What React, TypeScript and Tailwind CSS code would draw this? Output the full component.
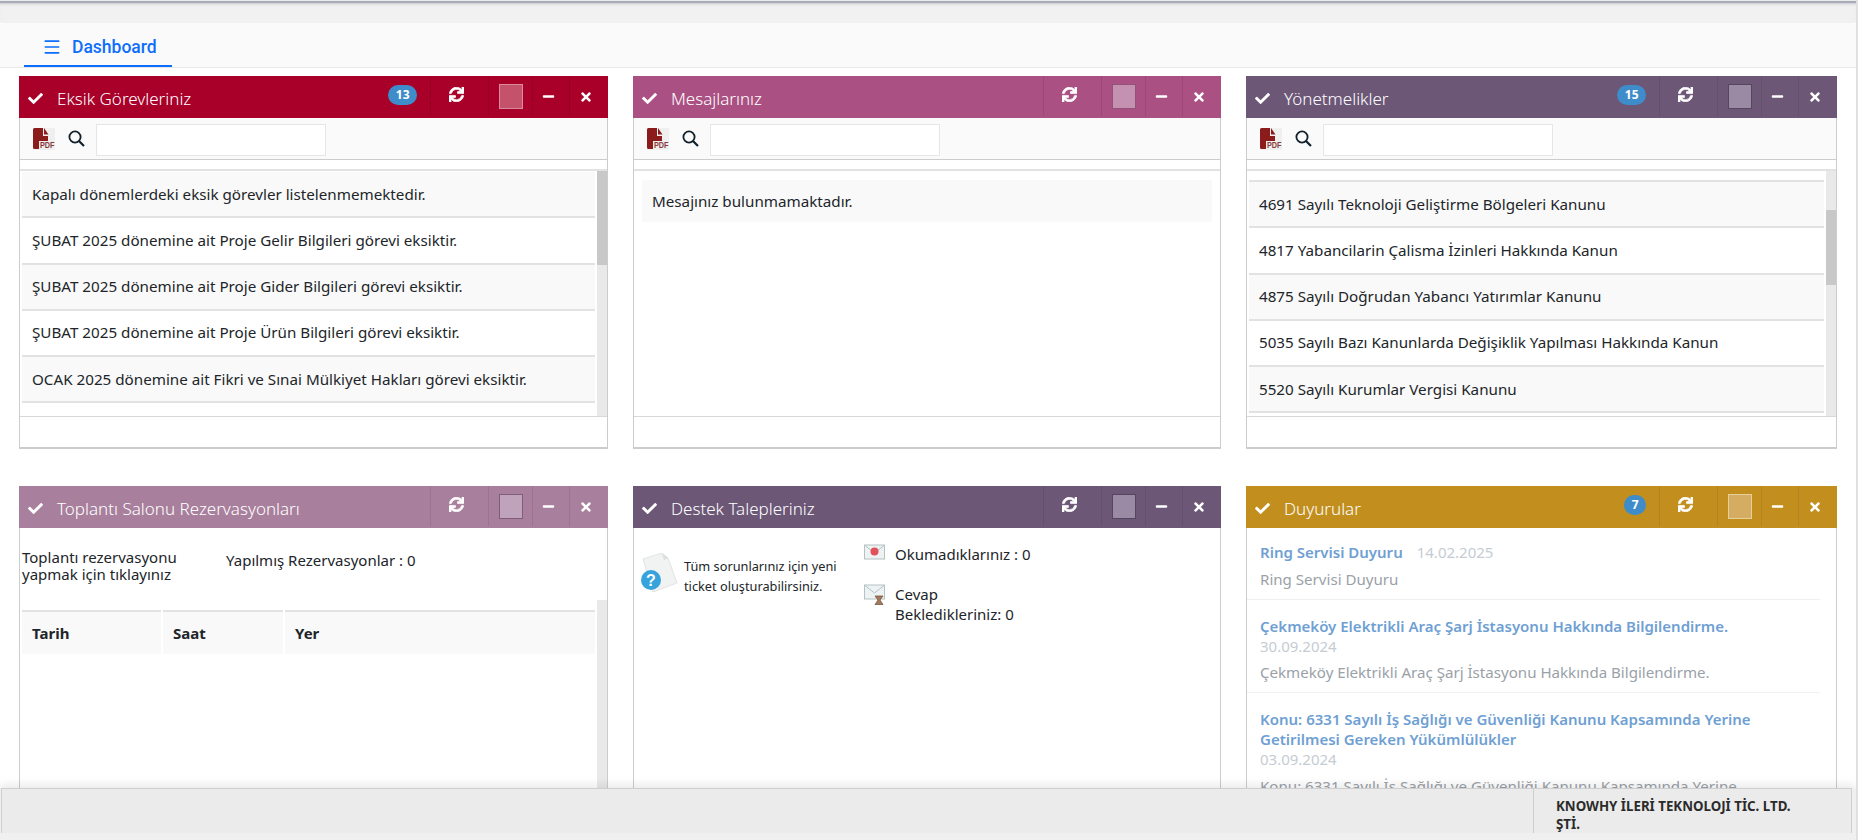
import { ReactNode } from 'react';
import { FaCheck, FaMinus, FaSync, FaTimes } from 'react-icons/fa';
import { Menu } from 'lucide-react';

const PdfIcon = () => (
  <svg width="22" height="22" viewBox="0 0 22 22" className="shrink-0 overflow-visible">
    <rect width="22" height="22" fill="#efefef" />
    <path d="M0 1.5 Q0 0 1.5 0 H10 V8 H15 V13 H6 V21 H1.5 Q0 21 0 19.5 Z" fill="#8c1c1c" />
    <path d="M11 0 L15.5 6.5 H11 Z" fill="#8c1c1c" />
    <text
      x="7"
      y="20"
      fontSize="8.5"
      fontWeight="700"
      fill="#8a3a3a"
      textLength="14.5"
      lengthAdjust="spacingAndGlyphs"
      fontFamily="'Liberation Sans', sans-serif"
    >
      PDF
    </text>
  </svg>
);

const SearchIcon = () => (
  <svg width="17" height="17" viewBox="0 0 17 17" fill="none" stroke="#10202c" strokeWidth="1.8" className="shrink-0">
    <circle cx="7" cy="7" r="5.6" />
    <path d="M11 11 L16 16" strokeWidth="2.2" />
  </svg>
);

const TicketIcon = () => (
  <svg width="38" height="40" viewBox="0 0 38 40" className="shrink-0">
    <path d="M3 6 L22 0 L28 5 L37 30 L13 39 Z" fill="#f1f2f2" stroke="#e2e4e4" />
    <path d="M22 0 L24 7 L28 5 Z" fill="#dcdfdf" />
    <circle cx="11" cy="27" r="10" fill="#36a3dc" />
    <text x="11" y="33" textAnchor="middle" fontSize="16" fontWeight="700" fill="#fff" fontFamily="'Liberation Sans', sans-serif">?</text>
  </svg>
);

const MailIcon = ({ hourglass }: { hourglass?: boolean }) => (
  <svg width="21" height={hourglass ? 21 : 16} viewBox={hourglass ? '0 0 21 21' : '0 0 21 16'} className="shrink-0">
    <rect x="0.5" y="1" width="20" height="14" fill="#eef2f2" stroke="#b4c2c2" />
    <path d="M1 1.5 L10.5 9 L20 1.5" fill="none" stroke="#b4c2c2" />
    {hourglass ? (
      <path d="M11 12 H19 L16 16 L19 20.5 H11 L14 16 Z" fill="#a57a5c" stroke="#6d4c3a" strokeWidth="0.7" />
    ) : (
      <circle cx="10.5" cy="7.5" r="4" fill="#e0535c" />
    )}
  </svg>
);

type PanelProps = {
  title: string;
  color: string;
  swatch: string;
  divider: string;
  badge?: string;
  children: ReactNode;
};

const Panel = ({ title, color, swatch, divider, badge, children }: PanelProps) => (
  <div className="h-[373px] bg-white border-x border-b-2 border-[#cccccc] min-w-0">
    <div className={`h-[42px] -mx-px pr-[1px] flex items-stretch text-white ${color}`}>
      <div className="flex items-center flex-1 min-w-0 pl-[9px]">
        <FaCheck className="w-[15px] h-[15px] mt-[2px] shrink-0" />
        <span className="ml-[14px] text-[17px] font-light leading-none mt-[2px]">{title}</span>
      </div>
      {badge && (
        <div className="flex items-start pt-[9px] pr-[13px]">
          <span className="h-[20px] px-[7.5px] rounded-full bg-[#3f8ccb] text-[12px] font-bold flex items-center justify-center">
            {badge}
          </span>
        </div>
      )}
      <div className={`w-[58px] h-[40px] border-l ${divider} flex justify-center pt-[11px] pr-[6px]`}>
        <FaSync className="w-[15px] h-[15px] stroke-[24px]" />
      </div>
      <div className={`w-[44px] h-[40px] border-l ${divider} flex justify-center pt-[8px]`}>
        <div className={`w-[24px] h-[25px] border ${swatch}`} />
      </div>
      <div className={`w-[37px] h-[40px] border-l ${divider} flex justify-center pt-[14px] pr-[6px]`}>
        <FaMinus className="w-[13px] h-[13px]" />
      </div>
      <div className={`w-[38px] h-[40px] border-l ${divider} flex justify-center pt-[14px] pr-[6px]`}>
        <FaTimes className="w-[14px] h-[14px]" />
      </div>
    </div>
    {children}
  </div>
);

const Toolbar = () => (
  <div className="h-[42px] bg-[#fafafa] border-b border-[#cccccc] flex items-center pl-[13px]">
    <PdfIcon />
    <div className="ml-[13px]">
      <SearchIcon />
    </div>
    <input className="ml-[11px] mt-[3px] w-[230px] h-[32px] bg-white border border-[#e6e6e6]" />
  </div>
);

const Rows = ({ items, scrolled, thumb }: { items: string[]; scrolled?: boolean; thumb?: string }) => (
  <>
    <div className="h-[9px] bg-white" />
    <div className="h-[248px] border-t-2 border-[#e2e2e2] border-b border-b-[#d8d8d8] flex overflow-hidden">
      <div className={`flex-1 min-w-0 pl-[2px] pr-[2px] ${scrolled ? 'pt-[9px]' : 'pt-[1px]'}`}>
        {items.map((t, i) => (
          <div
            key={t}
            className={`h-[46.25px] flex items-center pl-[10px] border-[#e2e2e2] ${scrolled ? 'border-t-2' : 'border-b-2'} ${i % 2 === 0 ? 'bg-[#f9f9f9]' : 'bg-white'}`}
          >
            <span className="text-[15.2px] text-[#212529]">{t}</span>
          </div>
        ))}
        {scrolled && <div className="border-t-2 border-[#e2e2e2]" />}
      </div>
      {thumb && (
        <div className="w-[10px] bg-[#e9e9e9] shrink-0">
          <div className={`w-full bg-[#c8c8c8] ${thumb}`} />
        </div>
      )}
    </div>
  </>
);

const announcements = [
  { title: 'Ring Servisi Duyuru', date: '14.02.2025', inline: true, body: 'Ring Servisi Duyuru' },
  {
    title: 'Çekmeköy Elektrikli Araç Şarj İstasyonu Hakkında Bilgilendirme.',
    date: '30.09.2024',
    body: 'Çekmeköy Elektrikli Araç Şarj İstasyonu Hakkında Bilgilendirme.',
  },
  {
    title: 'Konu: 6331 Sayılı İş Sağlığı ve Güvenliği Kanunu Kapsamında Yerine Getirilmesi Gereken Yükümlülükler',
    date: '03.09.2024',
    body: 'Konu: 6331 Sayılı İş Sağlığı ve Güvenliği Kanunu Kapsamında Yerine',
  },
];

export default function App() {
  return (
    <div className="h-[840px] overflow-hidden bg-white relative border-r-2 border-[#e0e0e0] font-['Noto_Sans','Open_Sans',sans-serif]">
      {/* Top strip */}
      <div className="h-[1px] bg-[#ececec]" />
      <div className="h-[22px] bg-[#f1f1f1] shadow-[inset_0_2px_0_#a8acb8,inset_0_5px_3px_-2px_#c4c6cc]" />
      {/* Tabs */}
      <div className="h-[45px] bg-[#fafafa] border-b border-[#e8e8e8] rounded-t-[3px] pl-[24px]">
        <div className="w-[148px] h-[44px] border-b-2 border-[#0d6efd] flex items-center pl-[18px] pt-[6px] text-[#0d6efd] font-['Roboto',sans-serif] text-[17.5px] font-medium">
          <Menu className="w-[20px] h-[20px]" strokeWidth={2} />
          <span className="ml-[10px]">Dashboard</span>
        </div>
      </div>

      <div className="grid grid-cols-[589px_588px_591px] gap-x-[25px] gap-y-[37px] pl-[19px] pt-[8px]">
        <Panel title="Eksik Görevleriniz" color="bg-[#a80029]" swatch="bg-[#c4526a] border-[#d98a9c]" divider="border-[#9a0025]" badge="13">
          <Toolbar />
          <Rows
            thumb="h-[94px]"
            items={[
              'Kapalı dönemlerdeki eksik görevler listelenmemektedir.',
              'ŞUBAT 2025 dönemine ait Proje Gelir Bilgileri görevi eksiktir.',
              'ŞUBAT 2025 dönemine ait Proje Gider Bilgileri görevi eksiktir.',
              'ŞUBAT 2025 dönemine ait Proje Ürün Bilgileri görevi eksiktir.',
              'OCAK 2025 dönemine ait Fikri ve Sınai Mülkiyet Hakları görevi eksiktir.',
            ]}
          />
        </Panel>

        <Panel title="Mesajlarınız" color="bg-[#ab5083]" swatch="bg-[#c492b0] border-[#93527a]" divider="border-[#9c4877]">
          <Toolbar />
          <div className="h-[9px]" />
          <div className="h-[248px] border-t-2 border-[#e2e2e2] border-b border-b-[#d8d8d8] px-[8px] pt-[9px]">
            <div className="h-[42px] bg-[#f9f9f9] flex items-center pl-[10px] text-[15.2px] text-[#212529]">
              Mesajınız bulunmamaktadır.
            </div>
          </div>
        </Panel>

        <Panel title="Yönetmelikler" color="bg-[#6c5777]" swatch="bg-[#9b8aa3] border-[#564560]" divider="border-[#62506c]" badge="15">
          <Toolbar />
          <Rows
            scrolled
            thumb="h-[75px] mt-[39px]"
            items={[
              '4691 Sayılı Teknoloji Geliştirme Bölgeleri Kanunu',
              '4817 Yabancilarin Çalisma İzinleri Hakkında Kanun',
              '4875 Sayılı Doğrudan Yabancı Yatırımlar Kanunu',
              '5035 Sayılı Bazı Kanunlarda Değişiklik Yapılması Hakkında Kanun',
              '5520 Sayılı Kurumlar Vergisi Kanunu',
            ]}
          />
        </Panel>

        <Panel title="Toplantı Salonu Rezervasyonları" color="bg-[#a87f9c]" swatch="bg-[#bfa3bb] border-[#7f5c77]" divider="border-[#9c7490]">
          <div className="flex">
            <div className="flex-1 min-w-0">
              <div className="flex pl-[2px] pt-[21px] h-[82px] text-[15px] text-[#212529]">
                <div className="w-[204px] leading-[17px]">
                  Toplantı rezervasyonu
                  <br />
                  yapmak için tıklayınız
                </div>
                <div className="pt-[3px] leading-[17px]">Yapılmış Rezervasyonlar : 0</div>
              </div>
              <div className="flex gap-[2px] px-[2px] text-[15px] font-bold text-[#212529]">
                {[
                  ['Tarih', 'w-[139px]'],
                  ['Saat', 'w-[120px]'],
                  ['Yer', 'flex-1'],
                ].map(([label, width]) => (
                  <div key={label} className={`${width} h-[44px] bg-[#f9f9f9] border-t-2 border-[#e2e2e2] flex items-center pl-[10px]`}>
                    {label}
                  </div>
                ))}
              </div>
            </div>
            <div className="w-[10px] mt-[72px] h-[260px] bg-[#e9e9e9] shrink-0" />
          </div>
        </Panel>

        <Panel title="Destek Talepleriniz" color="bg-[#6c5777]" swatch="bg-[#9b8aa3] border-[#564560]" divider="border-[#62506c]">
          <div className="flex pt-[16px] text-[#212529]">
            <div className="w-[230px] flex pl-[6px] pt-[9px]">
              <TicketIcon />
              <p className="ml-[6px] w-[165px] text-[12.75px] leading-[20px] pt-[3px]">
                Tüm sorunlarınız için yeni ticket oluşturabilirsiniz.
              </p>
            </div>
            <div className="text-[15px] leading-[20px]">
              <div className="flex">
                <MailIcon />
                <span className="ml-[10px]">Okumadıklarınız : 0</span>
              </div>
              <div className="flex mt-[20px]">
                <MailIcon hourglass />
                <span className="ml-[10px] w-[130px]">Cevap Bekledikleriniz: 0</span>
              </div>
            </div>
          </div>
        </Panel>

        <Panel title="Duyurular" color="bg-[#c28f1f]" swatch="bg-[#d4ad62] border-[#e7cf9a]" divider="border-[#b3841c]" badge="7">
          <div className="pt-[14px] pr-[16px] leading-[20px]">
            {announcements.map((a) => (
              <div key={a.title} className="pl-[13px] pb-[10px] mb-[16px] border-b border-[#f0f0f0]">
                <div className={a.inline ? 'flex' : ''}>
                  <div className="font-semibold text-[15px] text-[#6f9fd3]">{a.title}</div>
                  <div className={`text-[15px] text-[#c5ccd3] ${a.inline ? 'ml-[14px]' : ''}`}>{a.date}</div>
                </div>
                <div className="mt-[6.5px] text-[15.1px] text-[#9aa1a8]">{a.body}</div>
              </div>
            ))}
          </div>
        </Panel>
      </div>

      {/* Status bar */}
      <div className="absolute left-0 right-0 bottom-0 h-[52px] bg-[#f0f0f0] shadow-[0_-4px_8px_rgba(0,0,0,0.08)]">
        <div className="ml-[1px] mr-[4px] h-[45px] bg-[#ebebeb] border-t border-x border-[#cfcfcf] flex justify-end">
          <div className="w-[318px] border-l border-[#cfcfcf] pl-[22px] pr-[40px] pt-[8px] text-[13.3px] font-bold leading-[18px] text-[#2b2b2b]">
            KNOWHY İLERİ TEKNOLOJİ TİC. LTD. ŞTİ.
          </div>
        </div>
      </div>
    </div>
  );
}
